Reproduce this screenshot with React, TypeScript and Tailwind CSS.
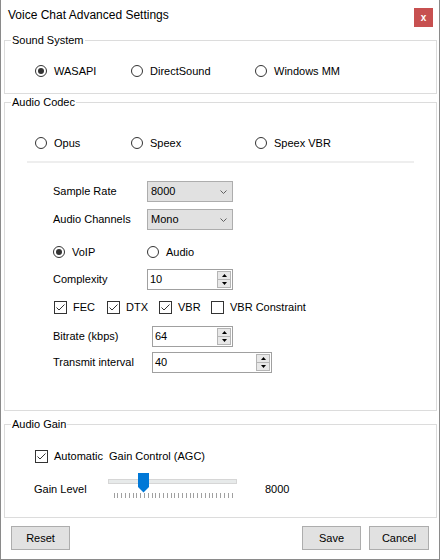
import React from "react";

function Radio({ label, checked, className }: { label: string; checked?: boolean; className?: string }) {
  return (
    <div className={"flex items-center gap-[7px] h-[14px] " + (className ?? "")}>
      <span className="w-[12px] h-[12px] shrink-0 rounded-full border border-[#333333] bg-white flex items-center justify-center">
        {checked && <span className="w-[6px] h-[6px] rounded-full bg-[#333333]" />}
      </span>
      <span className="whitespace-pre">{label}</span>
    </div>
  );
}

function Check({ label, checked, className }: { label: string; checked?: boolean; className?: string }) {
  return (
    <div className={"flex items-center gap-[6px] h-[14px] " + (className ?? "")}>
      <span className="w-[13px] h-[13px] shrink-0 border border-[#333333] bg-white flex items-center justify-center">
        {checked && (
          <svg width="11" height="11" viewBox="0 0 11 11">
            <path d="M1.5 5.5 L4 8 L9.5 2.5" fill="none" stroke="#333333" strokeWidth="1" />
          </svg>
        )}
      </span>
      <span className="whitespace-pre">{label}</span>
    </div>
  );
}

function Select({ value }: { value: string }) {
  return (
    <div className="w-[86px] h-[21px] border border-[#adadad] bg-[#e1e1e1] flex items-center justify-between pl-[3px] pr-[5px]">
      <span>{value}</span>
      <svg width="7" height="4" viewBox="0 0 7 4">
        <path d="M0.5 0.5 L3.5 3.5 L6.5 0.5" fill="none" stroke="#606060" strokeWidth="1" />
      </svg>
    </div>
  );
}

function Spin({ value, className }: { value: string; className: string }) {
  return (
    <div className={"h-[21px] border border-[#a0a0a0] bg-white flex " + className}>
      <span className="flex-1 pl-[2px] flex items-center">{value}</span>
      <div className="w-[16px] flex flex-col p-[1px]">
        <div className="flex-1 bg-[#e8e8e8] border border-[#b5b5b5] flex items-center justify-center">
          <svg width="5" height="3" viewBox="0 0 5 3">
            <path d="M0 3 L2.5 0 L5 3 Z" fill="#000000" />
          </svg>
        </div>
        <div className="flex-1 bg-[#e8e8e8] border border-[#b5b5b5] border-t-0 flex items-center justify-center">
          <svg width="5" height="3" viewBox="0 0 5 3">
            <path d="M0 0 L2.5 3 L5 0 Z" fill="#000000" />
          </svg>
        </div>
      </div>
    </div>
  );
}

function Slider() {
  const ticks: number[] = [];
  for (let i = 0; i < 32; i++) ticks.push(7.5 + (i * 118) / 31);
  return (
    <svg width="134" height="26" viewBox="0 0 134 26" className="shrink-0">
      <rect x="2.5" y="6.5" width="128" height="4" fill="#e7eaea" stroke="#d6d6d6" />
      {ticks.map((x, i) => (
        <line key={i} x1={Math.round(x) + 0.5} y1="20" x2={Math.round(x) + 0.5} y2="25" stroke="#a0a0a0" strokeWidth="1" />
      ))}
      <path d="M32 0 H43 V14 L37.5 19.5 L32 14 Z" fill="#0078d7" />
    </svg>
  );
}

function Button({ label, className }: { label: string; className?: string }) {
  return (
    <div className={"h-[24px] border border-[#adadad] bg-[#e1e1e1] flex items-center justify-center " + (className ?? "")}>
      {label}
    </div>
  );
}

export default function App() {
  return (
    <div className="w-[440px] h-[560px] bg-white border-x border-b border-[#8a8a8a] flex flex-col text-[11px] leading-[13px] text-black font-['Liberation_Sans',Arial,sans-serif]">
      {/* title bar */}
      <div className="h-[34px] flex items-start justify-between shrink-0">
        <div className="pt-[8px] pl-[7px] text-[12px] leading-[14px]">Voice Chat Advanced Settings</div>
        <div className="mt-[8px] mr-[6px] w-[19px] h-[19px] bg-[#c75050] text-white font-bold text-[10px] leading-none flex items-center justify-center">
          x
        </div>
      </div>

      {/* Sound System */}
      <fieldset className="ml-[3px] w-[433px] h-[60px] border border-[#dcdcdc] shrink-0">
        <legend className="ml-[6px] px-[1px] leading-[13px]">Sound System</legend>
        <div className="pt-[17px] pl-[30px] flex">
          <Radio label="WASAPI" checked className="w-[96px]" />
          <Radio label="DirectSound" className="w-[124px]" />
          <Radio label="Windows MM" />
        </div>
      </fieldset>

      {/* Audio Codec */}
      <fieldset className="mt-[2px] ml-[3px] w-[433px] h-[315px] border border-[#dcdcdc] shrink-0">
        <legend className="ml-[6px] px-[1px] leading-[13px]">Audio Codec</legend>
        <div className="flex flex-col">
          <div className="mt-[27px] pl-[30px] flex">
            <Radio label="Opus" className="w-[96px]" />
            <Radio label="Speex" className="w-[124px]" />
            <Radio label="Speex VBR" />
          </div>
          <div className="mt-[11px] ml-[22px] w-[387px] h-[2px] bg-[#eeeeee]" />
          <div className="mt-[18px] pl-[48px] flex items-center">
            <span className="w-[94px]">Sample Rate</span>
            <Select value="8000" />
          </div>
          <div className="mt-[7px] pl-[48px] flex items-center">
            <span className="w-[94px]">Audio Channels</span>
            <Select value="Mono" />
          </div>
          <div className="mt-[15px] pl-[48px] flex">
            <Radio label="VoIP" checked className="w-[94px]" />
            <Radio label="Audio" />
          </div>
          <div className="mt-[10px] pl-[48px] flex items-center">
            <span className="w-[94px]">Complexity</span>
            <Spin value="10" className="w-[86px]" />
          </div>
          <div className="mt-[10px] pl-[49px] flex">
            <Check label="FEC" checked className="w-[53px]" />
            <Check label="DTX" checked className="w-[52px]" />
            <Check label="VBR" checked className="w-[52px]" />
            <Check label="VBR Constraint" />
          </div>
          <div className="mt-[12px] pl-[48px] flex items-center">
            <span className="w-[99px]">Bitrate (kbps)</span>
            <Spin value="64" className="w-[81px]" />
          </div>
          <div className="mt-[5px] pl-[48px] flex items-center">
            <span className="w-[99px]">Transmit interval</span>
            <Spin value="40" className="w-[120px]" />
          </div>
        </div>
      </fieldset>

      {/* Audio Gain */}
      <fieldset className="mt-[7px] ml-[3px] w-[433px] h-[100px] border border-[#dcdcdc] shrink-0">
        <legend className="ml-[6px] px-[1px] leading-[13px]">Audio Gain</legend>
        <div className="flex flex-col">
          <div className="mt-[18px] pl-[30px] flex">
            <Check label="Automatic  Gain Control (AGC)" checked />
          </div>
          <div className="mt-[10px] pl-[29px] flex items-start">
            <span className="w-[72px] mt-[10px]">Gain Level</span>
            <Slider />
            <span className="ml-[25px] mt-[10px]">8000</span>
          </div>
        </div>
      </fieldset>

      {/* buttons */}
      <div className="mt-[8px] flex pl-[10px] pr-[10px]">
        <Button label="Reset" className="w-[59px]" />
        <Button label="Save" className="w-[59px] ml-auto" />
        <Button label="Cancel" className="w-[60px] ml-[8px]" />
      </div>
    </div>
  );
}
